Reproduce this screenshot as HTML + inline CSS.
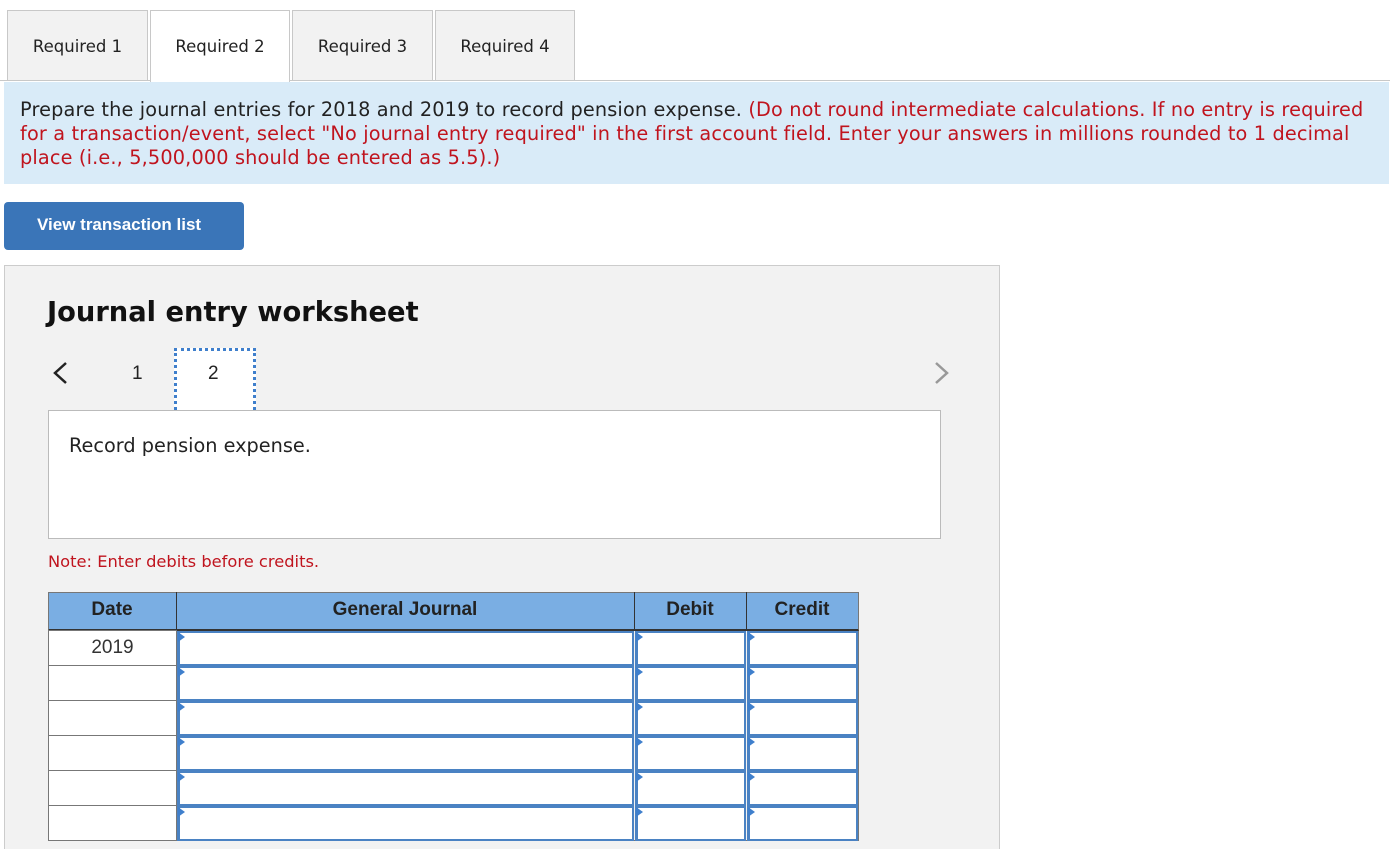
<!DOCTYPE html>
<html style="width:1390px;height:849px;overflow:hidden"><head><meta charset="utf-8"><style>
*{margin:0;padding:0;box-sizing:border-box}
body{width:1390px;height:849px;background:#fff;position:relative;overflow:hidden;font-family:"DejaVu Sans","Liberation Sans",sans-serif;color:#222}
.a{position:absolute}
.tab{position:absolute;top:10px;height:71px;background:#f2f2f2;border:1px solid #c8c8c8;font-size:16.5px;line-height:72px;text-align:center;color:#222}
.tab.on{background:#fff;border-bottom:none;height:72px}
.msg{font-size:19.3px;line-height:24px;letter-spacing:0.15px}
.red{color:#c0141e}
.ar{font-family:"Liberation Sans",Arial,sans-serif}
.cell{position:absolute;border:1px solid #777;background:#fff}
.inp{position:absolute;background:#fff;border:2px solid #4a82c3;border-left-width:3px}
.tri{position:absolute;width:0;height:0;border-top:5px solid transparent;border-bottom:5px solid transparent;border-left:7px solid #3f7fcc}
</style></head><body>
<div class="a" style="left:0;top:80px;width:1390px;height:1px;background:#c8c8c8"></div>
<div class="tab" style="left:7px;width:141px">Required 1</div>
<div class="tab on" style="left:150px;width:140px">Required 2</div>
<div class="tab" style="left:292px;width:141px">Required 3</div>
<div class="tab" style="left:435px;width:140px">Required 4</div>

<div class="a msg" style="left:4px;top:82px;width:1385px;height:102px;background:#d9ebf8;padding:16px 0 0 16px">Prepare the journal entries for 2018 and 2019 to record pension expense. <span class="red">(Do not round intermediate calculations. If no entry is required for a transaction/event, select "No journal entry required" in the first account field. Enter your answers in millions rounded to 1 decimal place (i.e., 5,500,000 should be entered as 5.5).)</span></div>

<div class="a ar" style="left:4px;top:202px;width:240px;height:48px;background:#3a75b8;border-radius:4px;color:#fff;font-weight:bold;font-size:17px;line-height:46px;padding-left:33px">View transaction list</div>

<div class="a" style="left:4px;top:265px;width:996px;height:600px;background:#f2f2f2;border:1px solid #ccc"></div>
<div class="a" style="left:47px;top:297px;font-size:27.3px;font-weight:bold;color:#111">Journal entry worksheet</div>
<svg class="a" style="left:50px;top:361px" width="20" height="24"><path d="M16 2 L5 12 L16 22" fill="none" stroke="#222" stroke-width="2.5"/></svg>
<div class="a ar" style="left:132px;top:363px;font-size:19px">1</div>
<div class="a" style="left:174px;top:348px;width:82px;height:67px;background:#fff;border:3px dotted #3f7fcc"></div>
<div class="a ar" style="left:208px;top:363px;font-size:19px">2</div>
<svg class="a" style="left:932px;top:361px" width="20" height="24"><path d="M4 2 L15 12 L4 22" fill="none" stroke="#999" stroke-width="2.5"/></svg>
<div class="a" style="left:48px;top:410px;width:893px;height:129px;background:#fff;border:1px solid #bbb;font-size:19.3px;padding:23px 0 0 20px">Record pension expense.</div>
<div class="a red" style="left:48px;top:552px;font-size:16.3px">Note: Enter debits before credits.</div>

<div class="a" style="left:48px;top:592px;width:811px;height:249px;border:1px solid #777"></div>
<div class="a ar" style="left:48px;top:592px;width:811px;height:39px;background:#7aaee3;border:1px solid #777;border-bottom:2px solid #333"></div>
<div class="a ar" style="left:48px;top:599px;width:128px;text-align:center;font-weight:bold;font-size:19px">Date</div>
<div class="a ar" style="left:176px;top:599px;width:458px;text-align:center;font-weight:bold;font-size:19px">General Journal</div>
<div class="a ar" style="left:634px;top:599px;width:112px;text-align:center;font-weight:bold;font-size:19px">Debit</div>
<div class="a ar" style="left:746px;top:599px;width:112px;text-align:center;font-weight:bold;font-size:19px">Credit</div>
<div class="a" style="left:176px;top:592px;width:1px;height:39px;background:#333"></div>
<div class="a" style="left:634px;top:592px;width:1px;height:39px;background:#333"></div>
<div class="a" style="left:746px;top:592px;width:1px;height:39px;background:#333"></div>
<div id="rows"></div>
<script>
var h='';for(var i=0;i<6;i++){var y=631+i*35;
h+='<div class="cell ar" style="left:48px;top:'+(y-1)+'px;width:129px;height:36px;font-size:19px;text-align:center;line-height:34px;color:#333">'+(i==0?'2019':'')+'</div>';
[[177,457],[635,111],[747,111]].forEach(function(c){h+='<div class="inp" style="left:'+c[0]+'px;top:'+y+'px;width:'+c[1]+'px;height:35px"></div><div class="tri" style="left:'+(c[0]+1)+'px;top:'+(y+1)+'px"></div>';});}
document.getElementById('rows').innerHTML=h;
</script>
</body></html>
